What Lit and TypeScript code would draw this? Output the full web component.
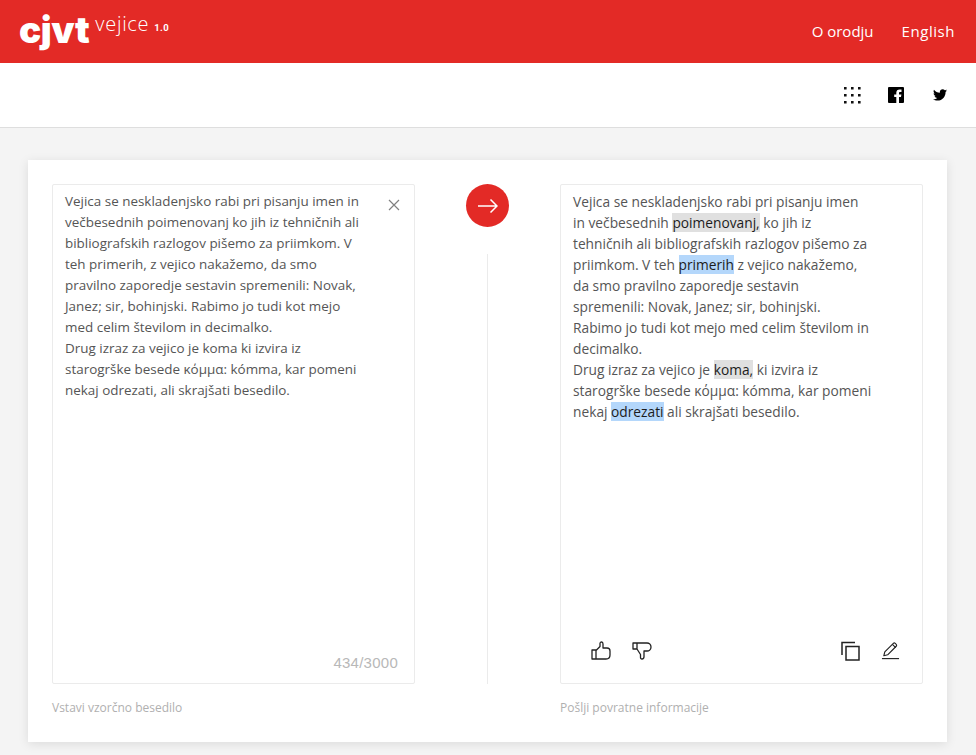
import { LitElement, html, css } from "lit";
import { customElement } from "lit/decorators.js";

@customElement("app-root")
export class AppRoot extends LitElement {
  static styles = css`
    :host { display: block; height: 755px; overflow: hidden; background: #f4f4f4; font-family: "Open Sans", "Liberation Sans", sans-serif; color: #555; }
    .top { height: 63px; background: #e32a26; display: flex; align-items: center; padding: 0 21px 0 19px; color: #fff; }
    .logo { display: flex; align-items: flex-start; height: 34px; margin-top: -3px; }
    .cjvt { font-family: "Inter", sans-serif; font-weight: 900; font-size: 37px; line-height: 34px; letter-spacing: -0.45px; }
    .vejice { font-family: "Open Sans", sans-serif; font-weight: 300; font-size: 20px; line-height: 20px; margin-left: 6px; margin-top: 1px; letter-spacing: .7px; }
    .ver { font-family: "Roboto", sans-serif; font-weight: 700; font-size: 9.5px; line-height: 12px; margin-left: 5px; margin-top: 9px; letter-spacing: .4px; }
    nav { margin-left: auto; display: flex; gap: 28px; font-size: 15px; margin-top: -2px; }
    .en { letter-spacing: .55px; }
    .sub { height: 65px; background: #fff; border-bottom: 1px solid #dedede; box-sizing: border-box; display: flex; align-items: center; justify-content: flex-end; padding-right: 29px; gap: 27px; }
    .sub svg { display: block; }
    .tw { margin-left: 2px; }
    .card { margin: 32px 29px 0 28px; height: 582px; background: #fff; box-shadow: 0 2px 10px rgba(0,0,0,.1); padding: 24px; box-sizing: border-box; display: grid; grid-template-columns: 363px 145px 363px; grid-template-rows: 500px auto; }
    .box { border: 1px solid #ebebeb; border-radius: 2px; position: relative; padding: 6px 12px; box-sizing: border-box; line-height: 21px; white-space: nowrap; }
    .src { font-size: 13.45px; }
    .res { font-size: 13.75px; }
    .close { position: absolute; top: 14px; right: 14px; display: block; }
    .count { position: absolute; right: 16px; bottom: 10px; font-size: 15px; line-height: 20px; letter-spacing: .25px; color: #b8b8b8; font-family: "Liberation Sans", sans-serif; }
    .mid { display: flex; flex-direction: column; align-items: center; }
    .go { width: 43px; height: 43px; border-radius: 50%; background: #e32a26; display: flex; align-items: center; justify-content: center; flex: none; }
    .rule { flex: 1; width: 1px; background: #ebebeb; margin-top: 27px; }
    mark { color: #1c1c1c; background: #e0e0e0; }
    mark.b { background: #b4d7fb; }
    .foot { font-size: 12px; line-height: 16px; color: #b0b0b0; margin-top: 16px; }
    .tools { position: absolute; left: 30px; right: 22px; bottom: 22px; display: flex; align-items: center; gap: 21px; }
    .tools .sp { margin-left: auto; }
    .tools svg { display: block; }
  `;
  render() {
    return html`
      <div class="top">
        <div class="logo"><span class="cjvt">cjvt</span><span class="vejice">vejice</span><span class="ver">1.0</span></div>
        <nav><span>O orodju</span><span class="en">English</span></nav>
      </div>
      <div class="sub">
        <svg width="17" height="17" viewBox="0 0 17 17" fill="#111">
          <path d="M0 0h2.600v2.600H0zM7 0h2.600v2.600H7zM14 0h2.600v2.600H14zM0 7h2.600v2.600H0zM7 7h2.600v2.600H7zM14 7h2.600v2.600H14zM0 14h2.600v2.600H0zM7 14h2.600v2.600H7zM14 14h2.600v2.600H14z"/>
        </svg>
        <svg width="16" height="16" viewBox="0 0 16 16"><path fill="#000" d="M1 0h14a1 1 0 0 1 1 1v14a1 1 0 0 1-1 1h-4v-6h2l.4-2.500H11V6.100c0-.8.3-1.200 1.200-1.200h1.300V2.600c-.5-.1-1.200-.1-1.900-.1-2 0-3.300 1.200-3.300 3.300v1.700H6.200V10h2.100v6H1a1 1 0 0 1-1-1V1a1 1 0 0 1 1-1z"/></svg>
        <svg class="tw" width="14" height="12" viewBox="0 0 24 20"><path fill="#000" d="M24 2.400c-.9.400-1.800.7-2.800.8 1-.6 1.800-1.600 2.200-2.700-1 .6-2 1-3.100 1.200C19.300.7 18 .1 16.600.1c-2.700 0-4.900 2.200-4.900 4.900 0 .4 0 .8.100 1.100C7.700 5.900 4.100 4 1.700.9 1.300 1.600 1 2.500 1 3.400c0 1.700.9 3.200 2.200 4.100-.8 0-1.600-.2-2.200-.6v.1c0 2.400 1.700 4.400 3.900 4.800-.4.100-.8.200-1.300.2-.3 0-.6 0-.9-.1.6 2 2.400 3.400 4.600 3.400-1.700 1.300-3.800 2.100-6.100 2.100-.4 0-.8 0-1.200-.1 2.200 1.400 4.800 2.200 7.500 2.200 9.100 0 14-7.500 14-14v-.6c1-.7 1.800-1.600 2.500-2.500z"/></svg>
      </div>
      <div class="card">
        <div class="box src">
          Vejica se neskladenjsko rabi pri pisanju imen in<br>
          večbesednih poimenovanj ko jih iz tehničnih ali<br>
          bibliografskih razlogov pišemo za priimkom. V<br>
          teh primerih, z vejico nakažemo, da smo<br>
          pravilno zaporedje sestavin spremenili: Novak,<br>
          Janez; sir, bohinjski. Rabimo jo tudi kot mejo<br>
          med celim številom in decimalko.<br>
          Drug izraz za vejico je koma ki izvira iz<br>
          starogrške besede κόμμα: kómma, kar pomeni<br>
          nekaj odrezati, ali skrajšati besedilo.
          <svg class="close" width="12" height="12" viewBox="0 0 12 12"><path d="M1 1l10 10M11 1L1 11" stroke="#808080" stroke-width="1.200" fill="none"/></svg>
          <div class="count">434/3000</div>
        </div>
        <div class="mid">
          <div class="go"><svg width="20" height="14" viewBox="0 0 20 14" fill="none" stroke="#fff" stroke-width="1.500"><path d="M0 7h19M12.500.5 19 7l-6.500 6.500"/></svg></div>
          <div class="rule"></div>
        </div>
        <div class="box res">
          Vejica se neskladenjsko rabi pri pisanju imen<br>
          in večbesednih <mark>poimenovanj,</mark> ko jih iz<br>
          tehničnih ali bibliografskih razlogov pišemo za<br>
          priimkom. V teh <mark class="b">primerih</mark> z vejico nakažemo,<br>
          da smo pravilno zaporedje sestavin<br>
          spremenili: Novak, Janez; sir, bohinjski.<br>
          Rabimo jo tudi kot mejo med celim številom in<br>
          decimalko.<br>
          Drug izraz za vejico je <mark>koma,</mark> ki izvira iz<br>
          starogrške besede κόμμα: kómma, kar pomeni<br>
          nekaj <mark class="b">odrezati</mark> ali skrajšati besedilo.
          <div class="tools">
            <svg width="20" height="20" viewBox="0 0 20 20" fill="none" stroke="#222" stroke-width="1.300" stroke-linejoin="round"><path d="M1 9h4v9H1zM5 9.500l4-4V2.500c0-1 .7-1.500 1.500-1.500S12 2 12 3v4h4c1.800 0 3 1.200 3 3v4c0 2.500-1.500 4-4 4H5"/></svg>
            <svg width="20" height="20" viewBox="0 0 20 20" fill="none" stroke="#222" stroke-width="1.300" stroke-linejoin="round"><path d="M1 2h4v6H1zM5 2h10c2 0 4 1.500 4 4s-2 4-4 4h-3v5.500c0 1.500-1 2.500-2 2.500s-1.500-.7-1.500-1.500V13.500L5 8"/></svg>
            <svg class="sp" width="19" height="20" viewBox="0 0 19 20" fill="none" stroke="#222" stroke-width="1.500"><path d="M1 14V1.500h13"/><rect x="5" y="5.500" width="13" height="13.500"/></svg>
            <svg width="19" height="20" viewBox="0 0 20 20" fill="none" stroke="#222" stroke-width="1.200" stroke-linejoin="round"><path d="M1 18h18"/><path d="M3 15l1-4L13 2c.6-.6 1.400-.6 2 0l1 1c.6.600.6 1.400 0 2l-9 9z"/><path d="M12 3l3.500 3.500"/></svg>
          </div>
        </div>
        <div class="foot">Vstavi vzorčno besedilo</div>
        <div></div>
        <div class="foot">Pošlji povratne informacije</div>
      </div>
    `;
  }
}
